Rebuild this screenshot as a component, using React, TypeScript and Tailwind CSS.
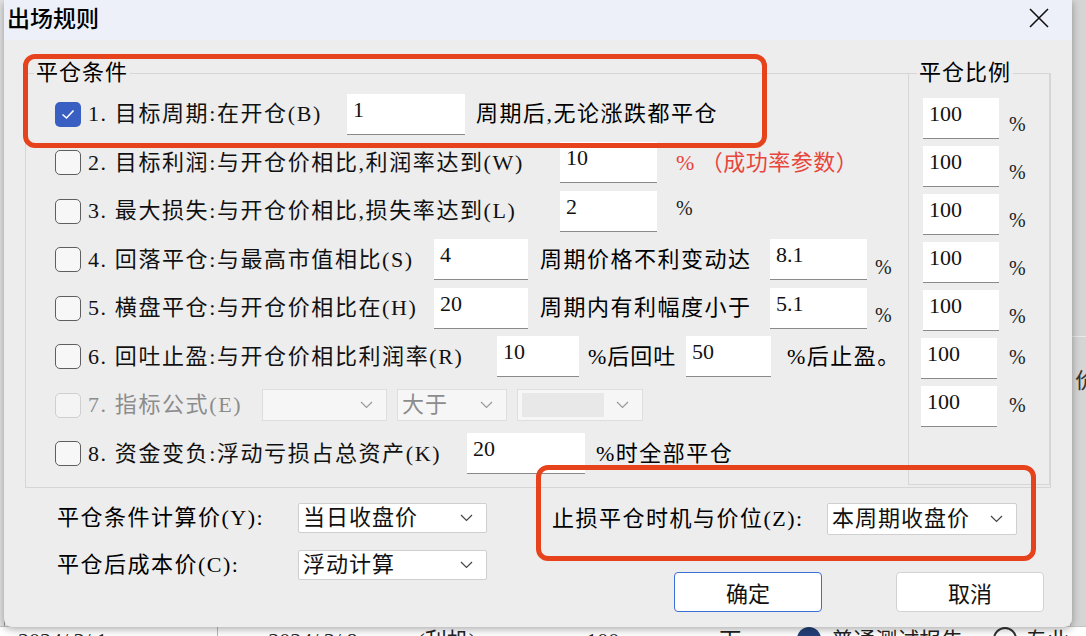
import React from "react";

const serif = "font-['Liberation_Serif','Noto_Sans_CJK_SC',serif]";

const Chevron = ({ color = "#555" }: { color?: string }) => (
  <svg width="13" height="8" viewBox="0 0 13 8" fill="none">
    <polyline points="1,1 6.5,6.5 12,1" stroke={color} strokeWidth="1.2" />
  </svg>
);

const Check = ({ checked, disabled }: { checked?: boolean; disabled?: boolean }) => {
  if (checked) {
    return (
      <div className="w-[26px] h-[25px] rounded-[5px] bg-[#3a5fc2] flex items-center justify-center shrink-0">
        <svg width="14" height="11" viewBox="0 0 14 11" fill="none">
          <polyline points="1.5,5.5 5.5,9 12.5,1.5" stroke="white" strokeWidth="1.6" />
        </svg>
      </div>
    );
  }
  return (
    <div
      className={
        disabled
          ? "w-[26px] h-[25px] rounded-[5px] border border-[#cfcfcf] bg-[#f4f4f4] shrink-0"
          : "w-[26px] h-[25px] rounded-[5px] border-[1.5px] border-[#5f5f5f] bg-[#f7f7f7] shrink-0"
      }
    />
  );
};

const Field = ({ w, v }: { w: string; v: string }) => (
  <div className={`${w} h-[41px] shrink-0 bg-white border-b-[1.5px] border-[#8a8a8a] pl-[6px] pt-[3px] text-[22px] leading-[26px] text-[#111]`}>
    {v}
  </div>
);

const Label = ({ w, children, dim }: { w: string; children: React.ReactNode; dim?: boolean }) => (
  <div className={`${w} shrink-0 pl-[7px] tracking-[1.6px] whitespace-nowrap ${dim ? "text-[#8c8c8c]" : "text-[#111]"}`}>
    {children}
  </div>
);

const Row = ({ children }: { children: React.ReactNode }) => (
  <div className="flex items-center h-[48.5px]">{children}</div>
);

const Pct = ({ ml }: { ml: string }) => <span className={`${ml} mt-[14px] text-[20px] text-[#222]`}>%</span>;

const DropDown = ({ w, h, text, dim, inner }: { w: string; h: string; text?: string; dim?: boolean; inner?: boolean }) => (
  <div
    className={`${w} ${h} shrink-0 flex items-center justify-between pl-[4px] pr-[13px] border ${
      dim ? "bg-[#f6f6f6] border-[#dedede] text-[#8c8c8c]" : "bg-white border-[#cfcfcf] text-[#111] rounded-[2px]"
    }`}
  >
    {inner ? <div className="w-[82px] h-[24px] bg-[#e8e8e8]" /> : <span className="tracking-[1px]">{text}</span>}
    <Chevron color={dim ? "#9a9a9a" : "#444"} />
  </div>
);

export default function App() {
  return (
    <div className={`relative w-[1086px] h-[636px] overflow-hidden bg-white ${serif} text-[22px] leading-[28px]`}>
      {/* desktop behind the dialog */}
      <div className="absolute left-0 top-0 w-[5px] h-[636px] bg-[#e4e4e4] border-r border-[#9a9a9a]" />
      <div className="absolute right-0 top-0 w-[16px] h-[636px] bg-[#d5d5d5] border-l border-[#bdbdbd]">
        <div className="mt-[336px] h-px bg-[#eaeaea]" />
        <div className="mt-[30px] pl-[4px] text-[#333]">价</div>
      </div>
      <div className="absolute left-0 top-[626px] w-[1086px] h-[30px] flex items-start text-[#222] border-t border-[#c4c4c4] bg-white">
        <span className="ml-[18px]">2024/ 3/ 1</span>
        <span className="ml-[110px] border-l border-[#bbb] pl-[50px]">2024/ 3/ 8</span>
        <span className="ml-[60px]">(利机)</span>
        <span className="ml-[110px]">100</span>
        <span className="ml-[100px]">下</span>
        <span className="ml-[56px] w-[24px] h-[24px] rounded-full bg-[#24407a]" />
        <span className="ml-[10px]">普通测试报告</span>
        <span className="ml-[30px] w-[24px] h-[24px] rounded-full border-2 border-[#333]" />
        <span className="ml-[8px]">专业</span>
      </div>

      {/* dialog window */}
      <div className="absolute left-[4px] top-0 w-[1068px] h-[627px] bg-[#ededed] rounded-b-[8px] shadow-[0_2px_8px_rgba(0,0,0,0.35)] overflow-hidden">
        <div className="h-[40px] bg-[#eef0f9] flex items-center justify-between pl-[3px] pr-[22px]">
          <span className="font-['Noto_Sans_CJK_SC',sans-serif] text-[23px] font-medium text-black -mt-[6px]">出场规则</span>
          <svg width="22" height="22" viewBox="0 0 22 22" fill="none" className="-mt-[4px]">
            <path d="M2 2 L20 20 M20 2 L2 20" stroke="#111" strokeWidth="1.6" />
          </svg>
        </div>

        {/* 平仓条件 group */}
        <div className="relative mt-[33px] ml-[21px] w-[1026px] h-[415px] border border-[#d6d6d6]">
          <span className="absolute -top-[16px] left-[8px] px-[2px] bg-[#ededed] leading-[30px] tracking-[1px]">平仓条件</span>

          <div className="pt-[16px] pl-[29px] flex flex-col">
            <Row>
              <Check checked />
              <Label w="w-[266px]">1. 目标周期:在开仓(B)</Label>
              <Field w="w-[118px]" v="1" />
              <span className="ml-[11px] tracking-[1.5px]">周期后,无论涨跌都平仓</span>
            </Row>
            <Row>
              <Check />
              <Label w="w-[479px]">2. 目标利润:与开仓价相比,利润率达到(W)</Label>
              <Field w="w-[97px]" v="10" />
              <span className="ml-[19px] text-[#e8453c] tracking-[0.5px] whitespace-nowrap">% （成功率参数）</span>
            </Row>
            <Row>
              <Check />
              <Label w="w-[479px]">3. 最大损失:与开仓价相比,损失率达到(L)</Label>
              <Field w="w-[97px]" v="2" />
              <span className="ml-[19px] text-[20px] text-[#222] -mt-[6px]">%</span>
            </Row>
            <Row>
              <Check />
              <Label w="w-[353px]">4. 回落平仓:与最高市值相比(S)</Label>
              <Field w="w-[94px]" v="4" />
              <span className="ml-[12px] w-[230px] tracking-[1.5px]">周期价格不利变动达</span>
              <Field w="w-[97px]" v="8.1" />
              <Pct ml="ml-[8px]" />
            </Row>
            <Row>
              <Check />
              <Label w="w-[353px]">5. 横盘平仓:与开仓价相比在(H)</Label>
              <Field w="w-[94px]" v="20" />
              <span className="ml-[12px] w-[230px] tracking-[1.5px]">周期内有利幅度小于</span>
              <Field w="w-[97px]" v="5.1" />
              <Pct ml="ml-[8px]" />
            </Row>
            <Row>
              <Check />
              <Label w="w-[416px]">6. 回吐止盈:与开仓价相比利润率(R)</Label>
              <Field w="w-[82px]" v="10" />
              <span className="ml-[9px] w-[98px] tracking-[1px]">%后回吐</span>
              <Field w="w-[85px]" v="50" />
              <span className="ml-[16px] tracking-[1.5px]">%后止盈。</span>
            </Row>
            <Row>
              <Check disabled />
              <Label w="w-[181px]" dim>
                7. 指标公式(E)
              </Label>
              <DropDown w="w-[125px]" h="h-[32px]" dim />
              <div className="ml-[10px]">
                <DropDown w="w-[110px]" h="h-[32px]" text="大于" dim />
              </div>
              <div className="ml-[10px]">
                <DropDown w="w-[126px]" h="h-[32px]" dim inner />
              </div>
            </Row>
            <Row>
              <Check />
              <Label w="w-[386px]">8. 资金变负:浮动亏损占总资产(K)</Label>
              <Field w="w-[118px]" v="20" />
              <span className="ml-[11px] tracking-[1.5px]">%时全部平仓</span>
            </Row>
          </div>

          {/* 平仓比例 group */}
          <div className="absolute left-[882px] -top-px w-[142px] h-[412px] border border-[#d6d6d6]">
            <span className="absolute -top-[16px] left-[8px] px-[2px] bg-[#ededed] leading-[30px] tracking-[1px]">平仓比例</span>
            <div className="pt-[24px] pl-[14px] flex flex-col gap-[7px]">
              {[0, 1, 2, 3, 4].map((i) => (
                <div key={i} className="flex items-start h-[41px]">
                  <Field w="w-[76px]" v="100" />
                  <span className="ml-[10px] mt-[14px] text-[20px] leading-[24px] text-[#222]">%</span>
                </div>
              ))}
              {[5, 6].map((i) => (
                <div key={i} className="flex items-start h-[41px] -ml-[2px]">
                  <Field w="w-[76px]" v="100" />
                  <span className="ml-[12px] mt-[7px] text-[20px] leading-[24px] text-[#222]">%</span>
                </div>
              ))}
            </div>
          </div>
        </div>

        {/* bottom settings */}
        <div className="mt-[15px] flex">
          <div className="w-[548px] pl-[53px] flex flex-col gap-[17px]">
            <div className="flex items-center h-[30px]">
              <span className="w-[241px] tracking-[1.5px]">平仓条件计算价(Y):</span>
              <DropDown w="w-[189px]" h="h-[30px]" text="当日收盘价" />
            </div>
            <div className="flex items-center h-[30px]">
              <span className="w-[241px] tracking-[1.5px]">平仓后成本价(C):</span>
              <DropDown w="w-[189px]" h="h-[30px]" text="浮动计算" />
            </div>
          </div>
          <div className="flex flex-col">
            <div className="flex items-center h-[32px]">
              <span className="w-[275px] tracking-[1.5px]">止损平仓时机与价位(Z):</span>
              <DropDown w="w-[190px]" h="h-[32px]" text="本周期收盘价" />
            </div>
            <div className="mt-[37px] ml-[122px] flex gap-[74px]">
              <button className="w-[148px] h-[40px] bg-white border border-[#3b6fd6] rounded-[4px] font-['Noto_Sans_CJK_SC',sans-serif] text-[22px] text-[#111]">
                确定
              </button>
              <button className="w-[148px] h-[40px] bg-white border border-[#d2d2d2] rounded-[4px] font-['Noto_Sans_CJK_SC',sans-serif] text-[22px] text-[#111]">
                取消
              </button>
            </div>
          </div>
        </div>
      </div>

      {/* red annotation boxes */}
      <div className="absolute left-[23px] top-[54px] w-[744px] h-[94px] border-[5px] border-[#e6431d] rounded-[12px]" />
      <div className="absolute left-[536px] top-[465px] w-[500px] h-[96px] border-[5px] border-[#e6431d] rounded-[12px]" />
    </div>
  );
}
